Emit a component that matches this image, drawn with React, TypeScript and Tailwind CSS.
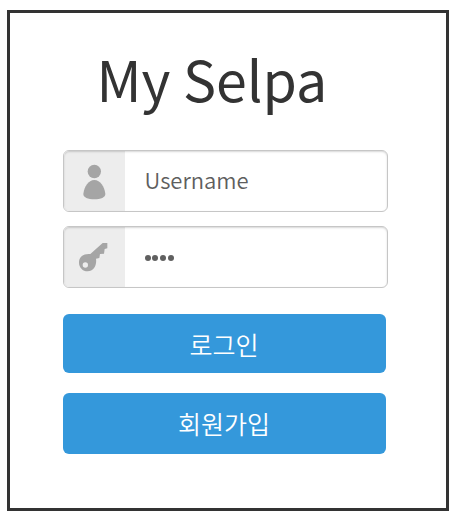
import type { ReactNode } from "react";

function UserIcon() {
    return (
        <svg viewBox="0 0 150 150" className="ml-0.5 h-[50px] w-[50px] fill-[#a5a5a5]" aria-hidden="true">
            <circle cx="73" cy="46.5" r="20" />
            <path d="M73 72C91 72 103 92 106 113C107 124 92 129.500 73 129.500C54 129.500 39 124 40 113C43 92 55 72 73 72Z" />
        </svg>
    );
}

function KeyIcon() {
    return (
        <svg viewBox="0 0 150 150" className="ml-0.5 h-[50px] w-[50px] fill-[#a5a5a5]" aria-hidden="true">
            <path
                fillRule="evenodd"
                d="M98 33L112 33L112 49L104 51L102 65L90 66L88 78L78 80C81 101 71 118 53 118C38 118 27 106 27 92C27 74 40 64 61 66ZM46 91A8 8 0 1 0 46 107A8 8 0 1 0 46 91Z"
            />
        </svg>
    );
}

interface FieldProps {
    icon: ReactNode;
    children: ReactNode;
}

function Field({ icon, children }: FieldProps) {
    return (
        <label className="relative flex h-[62px] w-[325px] overflow-hidden rounded-md border border-[#c6c6c6] bg-white">
            <span className="flex w-[61px] shrink-0 items-center justify-center bg-[#ededed]">{icon}</span>
            {children}
            {/* Inner shadow over the addon and the input */}
            <span className="pointer-events-none absolute inset-0 rounded-[5px] shadow-[inset_0_1px_2px_rgba(0,0,0,0.16)]" />
        </label>
    );
}

export default function App() {
    return (
        <div className="h-[523px] w-[462px] bg-white pt-[10px] pl-[7px] font-['Noto_Sans_CJK_KR',sans-serif]">
            <main className="flex h-[501px] w-[442px] flex-col border-[3px] border-[#333333] pl-[52.500px]">
                <h1 className="mt-[25px] ml-[34px] text-[55.500px] leading-[80px] whitespace-nowrap text-[#333333]">
                    My Selpa
                </h1>

                <form className="mt-8" onSubmit={(e) => e.preventDefault()}>
                    <div className="flex flex-col gap-[14px]">
                        <Field icon={<UserIcon />}>
                            <input
                                type="text"
                                aria-label="Username"
                                placeholder="Username"
                                className="min-w-0 flex-1 pb-[3px] pl-5 text-[22px] font-[350] text-[#5e5e5e] outline-none placeholder:text-[#5e5e5e]"
                            />
                        </Field>
                        <Field icon={<KeyIcon />}>
                            <span className="flex items-center gap-[1.800px] pt-[2px] pl-5" aria-label="Password">
                                {[0, 1, 2, 3].map((i) => (
                                    <span key={i} className="h-1.5 w-1.5 rounded-full bg-[#606060]" />
                                ))}
                            </span>
                        </Field>
                    </div>

                    <button
                        type="submit"
                        className="mt-[26px] flex h-[59px] w-[323px] items-center justify-center rounded-md bg-[#3498db] pt-0.5 text-[25px] font-[350] text-white"
                    >
                        로그인
                    </button>
                    <button
                        type="button"
                        className="mt-5 flex h-[61px] w-[323px] items-center justify-center rounded-md bg-[#3498db] text-[25px] font-[350] text-white"
                    >
                        회원가입
                    </button>
                </form>
            </main>
        </div>
    );
}
